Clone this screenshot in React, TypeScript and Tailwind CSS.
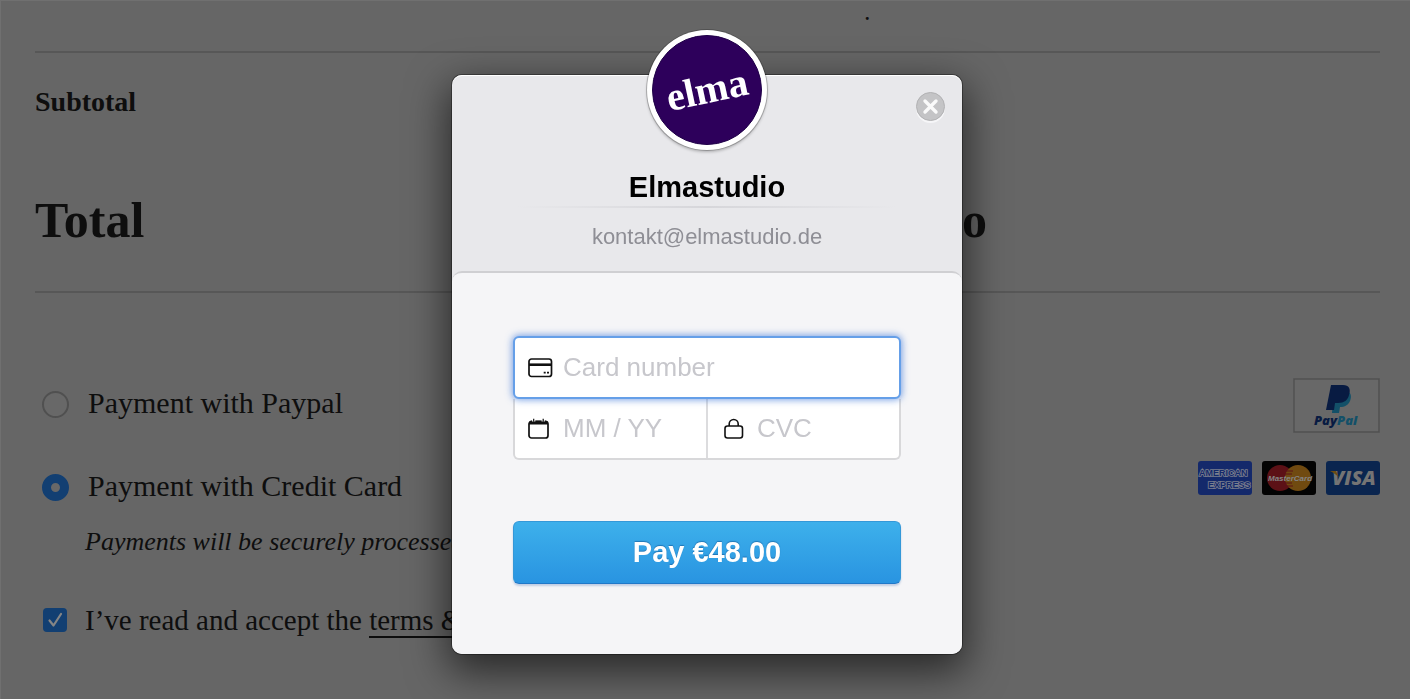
import type { FC, ReactNode } from 'react';

const CardIcon = () => (
  <svg width="26" height="22" viewBox="0 0 26 22" fill="none" aria-hidden="true">
    <rect x="1" y="2" width="22.500" height="17.500" rx="2.500" stroke="#111" strokeWidth="1.700" />
    <path d="M1 7.700h22.500" stroke="#111" strokeWidth="2.600" />
    <path d="M15.700 15.700h2M19 15.700h2" stroke="#111" strokeWidth="1.800" />
  </svg>
);

const CalendarIcon = () => (
  <svg width="26" height="22" viewBox="0 0 26 22" fill="none" aria-hidden="true">
    <rect x="1" y="3.500" width="19" height="16.500" rx="2.500" stroke="#111" strokeWidth="1.700" />
    <path d="M1 6.500V5a2.500 2.500 0 0 1 2.500-2.500h14A2.500 2.500 0 0 1 20 5v1.500z" fill="#111" />
    <path d="M5.700 0v3.500M15.200 0v3.500" stroke="#fff" strokeWidth="3.200" />
    <path d="M5.700 .800v3M15.200 .800v3" stroke="#111" strokeWidth="1.200" />
  </svg>
);

const LockIcon = () => (
  <svg width="22" height="22" viewBox="0 0 22 22" fill="none" aria-hidden="true">
    <rect x="2" y="8" width="17.500" height="12" rx="2.500" stroke="#111" strokeWidth="1.600" />
    <path d="M6.200 8V6a4.500 4.500 0 0 1 9 0v2" stroke="#111" strokeWidth="1.600" />
  </svg>
);

const PaypalLogo = () => (
  <svg className="h-[55px] w-[87px]" viewBox="0 0 87 55" role="img" aria-label="PayPal">
    <rect x="1" y="1" width="85" height="53" fill="#686868" stroke="#515151" strokeWidth="1.500" />
    <path d="M41 13h12c5 1 6 5 4 10-2 4-5 6-10 6l-1 6h-7z" fill="#135068" />
    <path d="M38 7h12c6 0 8 4 6 10-1 5-5 8-11 8h-3l-1 7h-8z" fill="#081b42" />
    <text x="21" y="47" fontFamily="Open Sans, sans-serif" fontSize="13" fontWeight="800" fontStyle="italic" fill="#081b42">
      Pay<tspan fill="#135068">Pal</tspan>
    </text>
  </svg>
);

const AmexLogo = () => (
  <svg className="h-[34px] w-[54px]" viewBox="0 0 54 34" role="img" aria-label="American Express">
    <rect width="54" height="34" rx="3" fill="#14296b" />
    <g fontFamily="Liberation Sans, sans-serif" fontSize="9" fontWeight="700" fill="#14296b" stroke="#7b7f8e" strokeWidth="1.600" paintOrder="stroke">
      <text x="1" y="15">AMERICAN</text>
      <text x="10" y="27">EXPRESS</text>
    </g>
  </svg>
);

const MastercardLogo = () => (
  <svg className="h-[34px] w-[54px]" viewBox="0 0 54 34" role="img" aria-label="MasterCard">
    <rect width="54" height="34" rx="3" fill="#030303" />
    <circle cx="18" cy="17" r="13" fill="#5c1116" />
    <circle cx="36" cy="17" r="13" fill="#704a10" />
    <path d="M23 10h8M22 13h8M22 22h8M23 25h8" stroke="#5c1116" strokeWidth="1.200" />
    <text x="6" y="20" fontFamily="Liberation Sans, sans-serif" fontSize="8" fontWeight="700" fontStyle="italic" fill="#858585">
      MasterCard
    </text>
  </svg>
);

const VisaLogo = () => (
  <svg className="h-[34px] w-[54px]" viewBox="0 0 54 34" role="img" aria-label="Visa">
    <rect width="54" height="34" rx="3" fill="#0a254f" />
    <text x="6" y="24" fontFamily="Open Sans, sans-serif" fontSize="20" fontWeight="800" fontStyle="italic" fill="#747474">
      VISA
    </text>
    <path d="M4 10h6l3 7c-2-3-5-5-9-7z" fill="#6b4d12" />
  </svg>
);

interface PaymentOptionProps {
  id: string;
  label: string;
  checked?: boolean;
  children: ReactNode;
}

const PaymentOption: FC<PaymentOptionProps> = ({ id, label, checked = false, children }) => {
  return (
    <div className="flex items-start">
      <input
        type="radio"
        id={id}
        name="payment"
        defaultChecked={checked}
        className="mt-[13px] ml-[7px] size-[27px] shrink-0 appearance-none rounded-full border-2 border-[#505050] bg-[#686868] checked:border-[9px] checked:border-[#123f72]"
      />
      <label htmlFor={id} className="mt-[7px] ml-[19px] text-[30px] leading-9">
        {label}
      </label>
      <div className="ml-auto flex gap-[10px]">{children}</div>
    </div>
  );
};

const Checkout = () => {
  return (
    <main className="min-h-screen border-t border-l border-[#707070] bg-[#666] pr-[30px] pl-[34px] font-['Liberation_Serif',serif] text-[#0e0e0e]">
      <table className="w-full text-left">
        <tbody>
          <tr className="h-[51px] border-b-2 border-[#575757]">
            <th className="w-[826px]" />
            <td className="pb-6 pl-1 text-lg leading-6 font-bold">.</td>
          </tr>
          <tr className="h-[98px] text-[28px]">
            <th className="font-bold">Subtotal</th>
            <td />
          </tr>
          <tr className="h-[142px] border-b-2 border-[#575757] text-[50px]">
            <th className="font-bold">Total</th>
            <td className="pl-[101px] font-bold">o</td>
          </tr>
        </tbody>
      </table>

      <form className="pt-[85px]">
        <PaymentOption id="paypal" label="Payment with Paypal">
          <PaypalLogo />
        </PaymentOption>
        <div className="mt-7">
          <PaymentOption id="credit-card" label="Payment with Credit Card" checked>
            <AmexLogo />
            <MastercardLogo />
            <VisaLogo />
          </PaymentOption>
        </div>
        <p className="mt-5 ml-[50px] text-[26px] leading-9 italic">Payments will be securely processed</p>
        <div className="mt-[42px] flex items-center">
          <span className="relative ml-2 size-6">
            <input
              type="checkbox"
              id="terms"
              defaultChecked
              className="block size-6 appearance-none rounded bg-[#686868] checked:bg-[#123f72]"
            />
            <svg className="pointer-events-none absolute inset-0" width="24" height="24" viewBox="0 0 24 24" fill="none" aria-hidden="true">
              <path d="M6.500 12.500l4 5L18 6" stroke="#858585" strokeWidth="2.200" strokeLinecap="round" strokeLinejoin="round" />
            </svg>
          </span>
          <label htmlFor="terms" className="ml-[18px] text-[29px] leading-9">
            I’ve read and accept the{' '}
            <a href="#terms" className="border-b-2 border-[#0e0e0e]">
              terms &amp;
            </a>
          </label>
        </div>
      </form>
    </main>
  );
};

const PaymentDialog = () => {
  return (
    <div
      role="dialog"
      aria-label="Elmastudio"
      className="relative w-[510px] rounded-[10px] bg-[#e8e8eb] font-['Liberation_Sans',sans-serif] shadow-[0_0_0_1px_rgba(0,0,0,0.35),0_14px_40px_4px_rgba(0,0,0,0.6)]"
    >
      <header className="flex flex-col items-center rounded-t-[10px] pb-[18px] shadow-[inset_0_1px_0_#fff]">
        <div className="-mt-[45px] flex size-[120px] items-center justify-center rounded-full bg-white shadow-[0_0_0_1px_rgba(0,0,0,0.2),0_2px_3px_rgba(0,0,0,0.25)]">
          <div className="flex size-[110px] items-center justify-center rounded-full border border-[#1f0047] bg-[#2d005b]">
            <span className="-rotate-12 font-['Liberation_Serif',serif] text-[40px] leading-none font-bold text-white">
              elma
            </span>
          </div>
        </div>
        <h1 className="mt-[19px] text-[29px] leading-[36px] font-bold text-black">Elmastudio</h1>
        <hr className="mt-px h-[2px] w-[380px] border-0 bg-linear-to-r from-transparent via-[#d6d6da] to-transparent" />
        <p className="mt-[13px] text-[22px] leading-[32px] text-[#8e8e95]">kontakt@elmastudio.de</p>
        <button
          type="button"
          aria-label="Close"
          className="absolute top-[17px] right-[17px] flex size-[29px] items-center justify-center rounded-full border border-[#b1b1b3] bg-[#c4c4c6] shadow-[0_2px_0_#f6f6f8]"
        >
          <svg width="19" height="19" viewBox="0 0 19 19" fill="none" aria-hidden="true">
            <path d="M4 4l11 11M15 4L4 15" stroke="#fafafa" strokeWidth="3.400" strokeLinecap="round" />
          </svg>
        </button>
      </header>

      <form className="rounded-[10px] border-t-2 border-[#cfcfd2] bg-[#f5f5f7] px-[61px] pt-[63px] pb-[70px]">
        <div className="relative z-10 flex h-[63px] items-center rounded-md border-2 border-[#659fe8] bg-white shadow-[0_0_7px_1px_rgba(70,125,220,0.7)]">
          <label htmlFor="card" className="ml-[13px] flex" aria-label="Card number">
            <CardIcon />
          </label>
          <input
            id="card"
            placeholder="Card number"
            className="ml-[9px] w-full min-w-0 text-[26px] outline-none placeholder:text-[#c7c7cc]"
          />
        </div>
        <div className="flex h-[61px] rounded-b-md border-2 border-t-0 border-[#d8d8da] bg-white">
          <div className="flex flex-1 items-center border-r-2 border-[#dcdcde]">
            <label htmlFor="expiry" className="ml-[13px] flex" aria-label="Expiry date">
              <CalendarIcon />
            </label>
            <input
              id="expiry"
              placeholder="MM / YY"
              className="ml-[9px] w-full min-w-0 text-[26px] outline-none placeholder:text-[#c7c7cc]"
            />
          </div>
          <div className="flex flex-1 items-center">
            <label htmlFor="cvc" className="ml-[15px] flex" aria-label="CVC">
              <LockIcon />
            </label>
            <input
              id="cvc"
              placeholder="CVC"
              className="ml-3 w-full min-w-0 text-[26px] outline-none placeholder:text-[#c7c7cc]"
            />
          </div>
        </div>
        <button
          type="submit"
          className="mt-[61px] h-[63px] w-full rounded-md border border-[#3498d8] border-b-[#2078c8] bg-linear-to-b from-[#3db0eb] to-[#2994e1] text-[29px] font-bold text-white shadow-[0_2px_2px_rgba(40,90,170,0.25)] [text-shadow:0_-1px_1px_rgba(0,50,110,0.4)]"
        >
          Pay €48.00
        </button>
      </form>
    </div>
  );
};

const App = () => {
  return (
    <>
      <Checkout />
      <div className="fixed inset-0 flex items-start justify-center overflow-hidden pt-[75px] pl-1">
        <PaymentDialog />
      </div>
    </>
  );
};

export default App;
